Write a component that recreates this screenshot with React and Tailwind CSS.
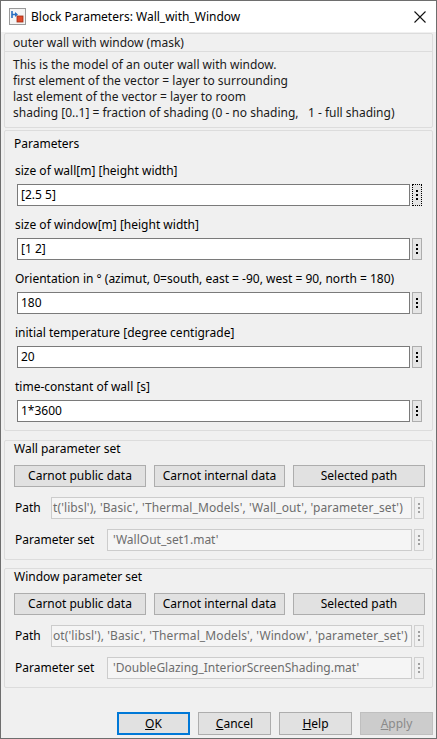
import React from "react";

function Dots({ focus, disabled }) {
  return (
    <div
      className={
        "w-[10px] h-[22px] flex flex-col items-center justify-center gap-[2px] " +
        (focus
          ? "border border-dotted border-black bg-[#e5e5e5]"
          : disabled
          ? "border border-[#d0d0d0] bg-[#f0f0f0]"
          : "border border-[#adadad] bg-[#e5e5e5]")
      }
    >
      <span className={"w-[2px] h-[2px] " + (disabled ? "bg-[#a0a0a0]" : "bg-black")} />
      <span className={"w-[2px] h-[2px] " + (disabled ? "bg-[#a0a0a0]" : "bg-black")} />
      <span className={"w-[2px] h-[2px] " + (disabled ? "bg-[#a0a0a0]" : "bg-black")} />
    </div>
  );
}

function Field({ label, value, focus }) {
  return (
    <div className="flex flex-col">
      <div className="h-[16px] leading-[16px] pl-[10px] mb-[5px]">{label}</div>
      <div className="flex items-center pl-[12px] gap-[2px]">
        <div className="w-[393px] h-[22px] bg-white border border-[#7a7a7a] px-[3px] leading-[20px]">{value}</div>
        <Dots focus={focus} />
      </div>
    </div>
  );
}

function SetButtons() {
  return (
    <div className="flex gap-[8px] pl-[9px]">
      <button className="w-[132px] h-[22px] bg-[#e1e1e1] border border-[#adadad] leading-[20px]">Carnot public data</button>
      <button className="w-[131px] h-[22px] bg-[#e1e1e1] border border-[#adadad] leading-[20px]">Carnot internal data</button>
      <button className="w-[132px] h-[22px] bg-[#e1e1e1] border border-[#adadad] leading-[20px]">Selected path</button>
    </div>
  );
}

function ParamSet({ title, path, file, top }) {
  return (
    <div className={"mx-[1px] border border-[#dcdcdc] rounded-[2px] pb-[8px] " + top}>
      <div className="h-[16px] leading-[16px] pl-[9px] mb-[8px]">{title}</div>
      <SetButtons />
      <div className="flex items-center mt-[10px] pl-[10px] gap-[2px]">
        <span className="w-[34px]">Path</span>
        <div className="w-[361px] h-[22px] bg-[#f5f5f5] border border-[#cccccc] pl-[1px] leading-[20px] text-[#6d6d6d] tracking-[0.1px] whitespace-nowrap overflow-hidden">
          {path}
        </div>
        <Dots disabled />
      </div>
      <div className="flex items-center mt-[10px] pl-[10px] gap-[2px]">
        <span className="w-[90px]">Parameter set</span>
        <div className="w-[305px] h-[22px] bg-[#f5f5f5] border border-[#cccccc] px-[5px] leading-[20px] text-[#6d6d6d] whitespace-nowrap">
          {file}
        </div>
        <Dots disabled />
      </div>
    </div>
  );
}

export default function App() {
  return (
    <div className="w-[437px] h-[739px] bg-[#f0f0f0] border border-[#6e6e6e] flex flex-col overflow-hidden font-['Noto_Sans',sans-serif] text-[12px] text-black">
      {/* title bar */}
      <div className="h-[31px] bg-white flex items-center pl-[8px] pr-[10px] shrink-0">
        <svg width="17" height="17" viewBox="0 0 17 17">
          <rect x="0.5" y="0.5" width="16" height="16" fill="#f4f4f4" stroke="#9a9a9a" />
          <path d="M3 3 L3 10 M3 6.5 L8 6.5" stroke="#2a6fc0" strokeWidth="1.6" fill="none" />
          <path d="M6 4 L9 6.5 L6 9 Z" fill="#2a6fc0" />
          <rect x="8" y="8" width="6" height="6" fill="#e0482a" stroke="#a02a10" strokeWidth="0.8" />
        </svg>
        <span className="ml-[5px] text-[12px]">Block Parameters: Wall_with_Window</span>
        <svg className="ml-auto" width="12" height="12" viewBox="0 0 12 12">
          <path d="M0.5 0.5 L11.5 11.5 M11.5 0.5 L0.5 11.5" stroke="#111" strokeWidth="1.1" />
        </svg>
      </div>

      <div className="flex flex-col px-[2px] pt-[1px]">
        {/* description */}
        <div className="mx-[1px] border border-[#dcdcdc] rounded-[2px] text-[#1a1a1a]">
          <div className="h-[18px] leading-[18px] pl-[8px] border-b border-[#dcdcdc]">outer wall with window (mask)</div>
          <div className="pl-[8px] pt-[5px] pb-[6px] leading-[16px]">
            <div>This is the model of an outer wall with window.</div>
            <div>first element of the vector = layer to surrounding</div>
            <div>last element of the vector = layer to room</div>
            <div className="whitespace-pre">shading [0..1] = fraction of shading (0 - no shading,   1 - full shading)</div>
          </div>
        </div>

        {/* parameters */}
        <div className="mx-[1px] mt-[2px] border border-[#dcdcdc] rounded-[2px] pt-[5px] pb-[8px]">
          <div className="h-[16px] leading-[16px] pl-[9px] mb-[11px]">Parameters</div>
          <div className="flex flex-col gap-[11px]">
            <Field label="size of wall[m] [height width]" value="[2.5 5]" focus />
            <Field label="size of window[m] [height width]" value="[1 2]" />
            <Field label="Orientation in ° (azimut, 0=south, east = -90, west = 90, north = 180)" value="180" />
            <Field label="initial temperature [degree centigrade]" value="20" />
            <Field label="time-constant of wall [s]" value="1*3600" />
          </div>
        </div>

        <ParamSet
          top="mt-[9px]"
          title="Wall parameter set"
          path="t('libsl'), 'Basic', 'Thermal_Models', 'Wall_out', 'parameter_set')"
          file="'WallOut_set1.mat'"
        />
        <ParamSet
          top="mt-[8px]"
          title="Window parameter set"
          path="ot('libsl'), 'Basic', 'Thermal_Models', 'Window', 'parameter_set')"
          file="'DoubleGlazing_InteriorScreenShading.mat'"
        />

        {/* dialog buttons */}
        <div className="flex justify-end gap-[8px] mt-[24px] pr-[1px]">
          <button className="w-[73px] h-[23px] bg-[#e1e1e1] border-2 border-[#0078d7] leading-[19px]">
            <u>O</u>K
          </button>
          <button className="w-[73px] h-[23px] bg-[#e1e1e1] border border-[#adadad] leading-[21px]">
            <u>C</u>ancel
          </button>
          <button className="w-[73px] h-[23px] bg-[#e1e1e1] border border-[#adadad] leading-[21px]">
            <u>H</u>elp
          </button>
          <button className="w-[73px] h-[23px] bg-[#cccccc] border border-[#bfbfbf] leading-[21px] text-[#8a8a8a]">
            <u>A</u>pply
          </button>
        </div>
      </div>
    </div>
  );
}
